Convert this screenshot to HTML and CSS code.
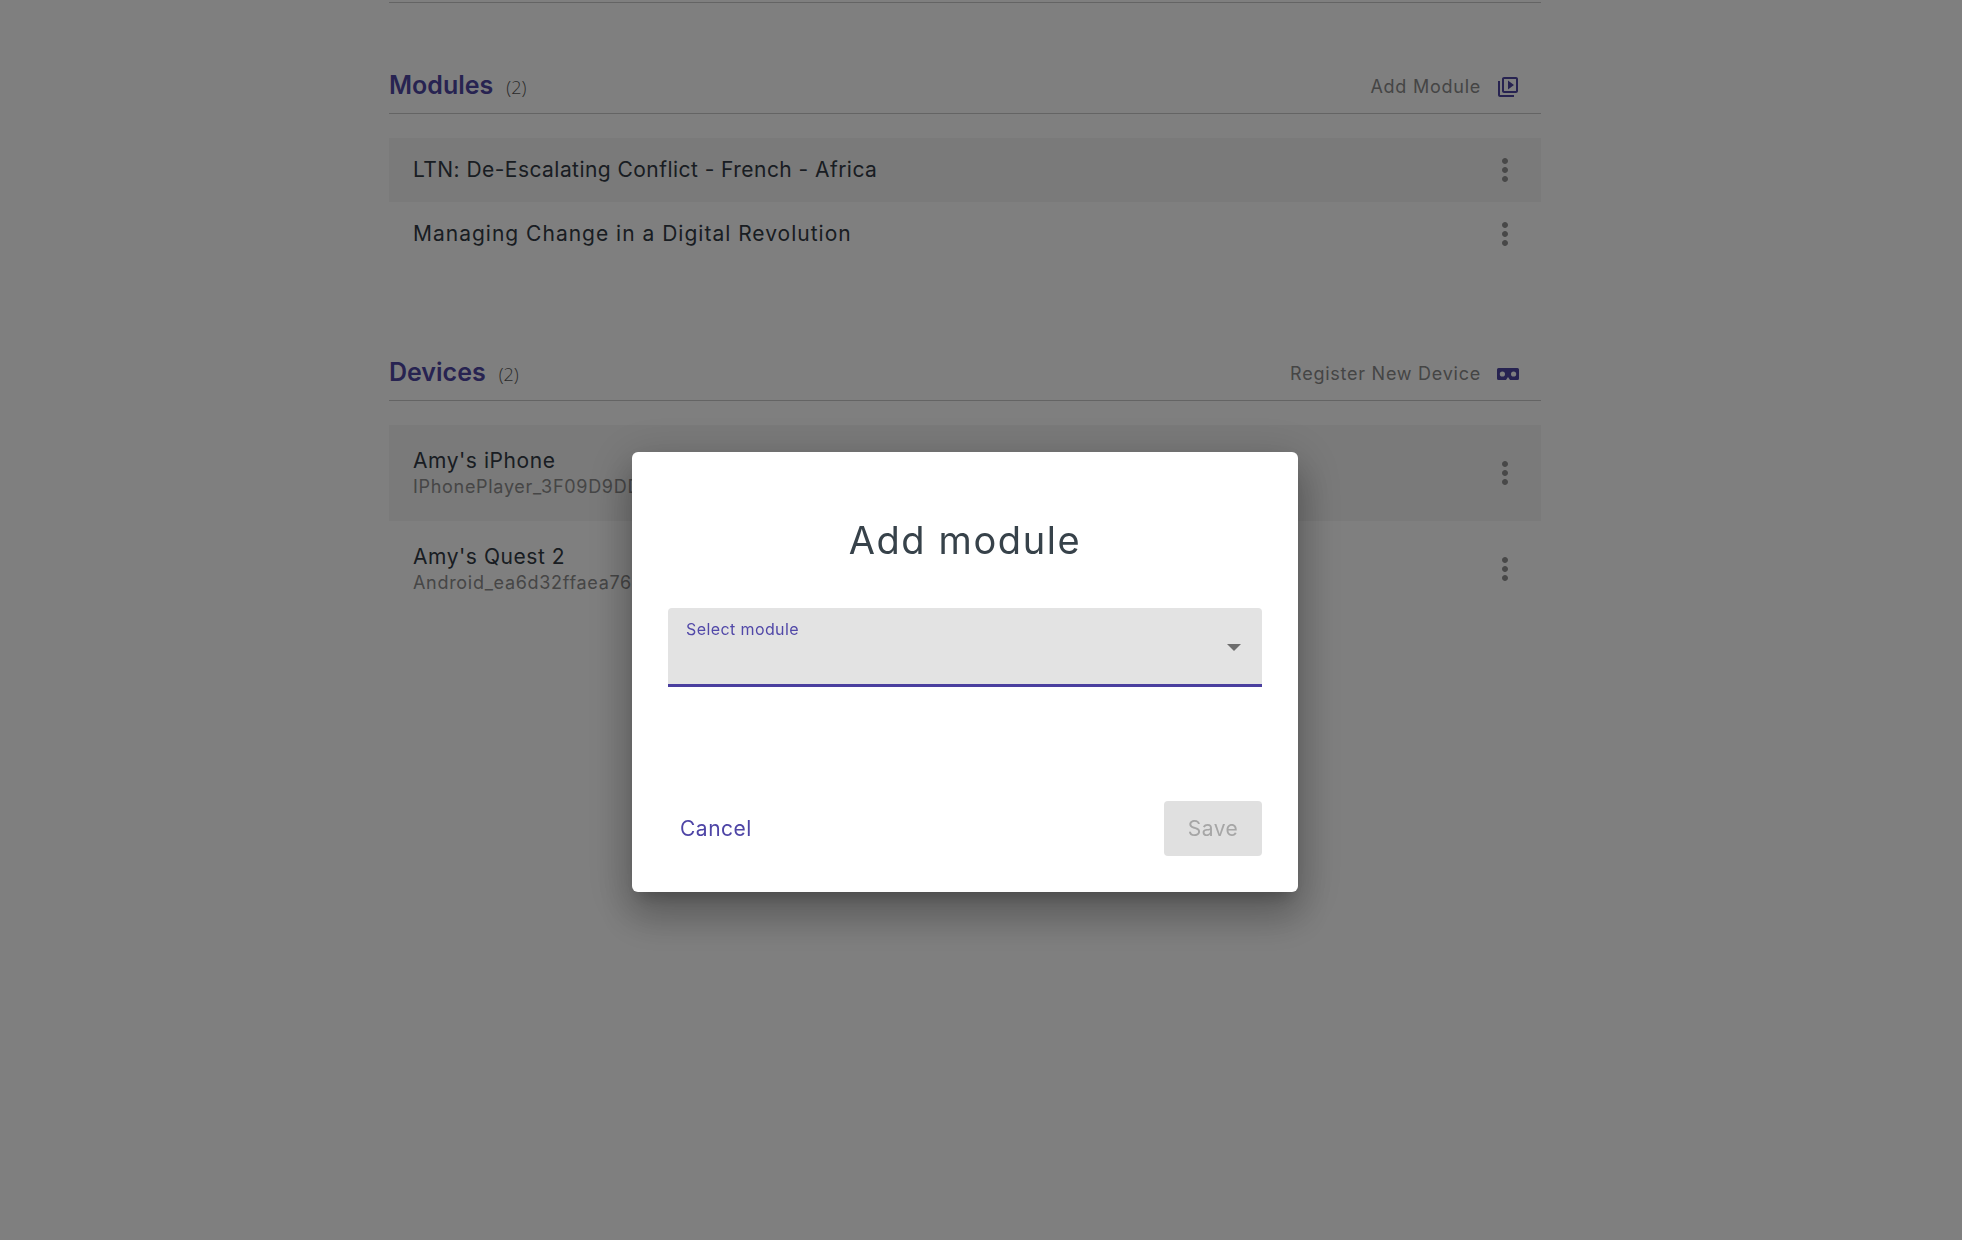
FILE: index.html
```html
<!DOCTYPE html>
<html lang="en">
<head>
    <meta charset="UTF-8">
    <title>Add module</title>
    <link rel="stylesheet" href="styles.css">
</head>
<body>

    <div class="page">
        <div class="top-rule"></div>

        <section class="section modules">
            <div class="section-head">
                <h2>Modules</h2>
                <span class="count">(2)</span>
                <a class="head-action">Add Module
                    <svg class="head-icon" viewBox="0 0 24 24"><path d="M4 6H2v14c0 1.100.9 2 2 2h14v-2H4V6zm16-4H8c-1.100 0-2 .9-2 2v12c0 1.100.9 2 2 2h12c1.100 0 2-.9 2-2V4c0-1.100-.9-2-2-2zm0 14H8V4h12v12zM12 5.500v9l6-4.500-6-4.500z"/></svg>
                </a>
            </div>
            <ul class="item-list">
                <li class="item shaded">
                    <div class="item-text"><div class="item-name tight">LTN: De-Escalating Conflict - French - Africa</div></div>
                    <svg class="more" viewBox="0 0 24 24"><path d="M12 8c1.100 0 2-.9 2-2s-.9-2-2-2-2 .9-2 2 .9 2 2 2zm0 2c-1.100 0-2 .9-2 2s.9 2 2 2 2-.9 2-2-.9-2-2-2zm0 6c-1.100 0-2 .9-2 2s.9 2 2 2 2-.9 2-2-.9-2-2-2z"/></svg>
                </li>
                <li class="item">
                    <div class="item-text"><div class="item-name wide">Managing Change in a Digital Revolution</div></div>
                    <svg class="more" viewBox="0 0 24 24"><path d="M12 8c1.100 0 2-.9 2-2s-.9-2-2-2-2 .9-2 2 .9 2 2 2zm0 2c-1.100 0-2 .9-2 2s.9 2 2 2 2-.9 2-2-.9-2-2-2zm0 6c-1.100 0-2 .9-2 2s.9 2 2 2 2-.9 2-2-.9-2-2-2z"/></svg>
                </li>
            </ul>
        </section>

        <section class="section devices">
            <div class="section-head">
                <h2>Devices</h2>
                <span class="count">(2)</span>
                <a class="head-action">Register New Device
                    <svg class="vr-icon" viewBox="0 0 22 12"><path fill-rule="evenodd" d="M1.500 0h19A1.500 1.500 0 0 1 22 1.500v9a1.500 1.500 0 0 1-1.500 1.500h-6L13 12l-2-3-2 3H1.500A1.500 1.500 0 0 1 0 10.500v-9A1.500 1.500 0 0 1 1.500 0zM5.400 3.400a2.600 2.600 0 1 0 0 5.200 2.600 2.600 0 0 0 0-5.200zm11.200 0a2.600 2.600 0 1 0 0 5.200 2.600 2.600 0 0 0 0-5.200z"/></svg>
                </a>
            </div>
            <ul class="item-list">
                <li class="item shaded tall">
                    <div class="item-text">
                        <div class="item-name">Amy's iPhone</div>
                        <div class="item-sub">IPhonePlayer_3F09D9DD</div>
                    </div>
                    <svg class="more" viewBox="0 0 24 24"><path d="M12 8c1.100 0 2-.9 2-2s-.9-2-2-2-2 .9-2 2 .9 2 2 2zm0 2c-1.100 0-2 .9-2 2s.9 2 2 2 2-.9 2-2-.9-2-2-2zm0 6c-1.100 0-2 .9-2 2s.9 2 2 2 2-.9 2-2-.9-2-2-2z"/></svg>
                </li>
                <li class="item tall">
                    <div class="item-text">
                        <div class="item-name">Amy's Quest 2</div>
                        <div class="item-sub">Android_ea6d32ffaea76c</div>
                    </div>
                    <svg class="more" viewBox="0 0 24 24"><path d="M12 8c1.100 0 2-.9 2-2s-.9-2-2-2-2 .9-2 2 .9 2 2 2zm0 2c-1.100 0-2 .9-2 2s.9 2 2 2 2-.9 2-2-.9-2-2-2zm0 6c-1.100 0-2 .9-2 2s.9 2 2 2 2-.9 2-2-.9-2-2-2z"/></svg>
                </li>
            </ul>
        </section>
    </div>

    <div class="overlay">
        <div class="dialog">
            <h1>Add module</h1>
            <div class="select-field">
                <span class="select-label">Select module</span>
                <span class="select-arrow"></span>
            </div>
            <div class="dialog-actions">
                <button class="btn-cancel">Cancel</button>
                <button class="btn-save" disabled>Save</button>
            </div>
        </div>
    </div>

</body>
</html>
```

FILE: styles.css
```css
html, body {
    margin: 0;
    height: 100%;
    overflow: hidden;
}
body {
    font-family: Inter, "Liberation Sans", sans-serif;
    background-color: #fff;
    color: #212b36;
}
.page {
    width: 1152px;
    margin-left: 389px;
}
.top-rule {
    height: 1px;
    margin-top: 2px;
    background-color: #c8c8c8;
}
.section-head {
    display: flex;
    align-items: baseline;
    height: 46px;
    border-bottom: 1px solid #c8c8c8;
}
.modules {
    margin-top: 64px;
}
.devices {
    margin-top: 88px;
}
h2 {
    margin: 0;
    font-size: 25px;
    line-height: 36px;
    font-weight: 600;
    color: #4f47a3;
}
.count {
    margin-left: 13px;
    font-family: "Open Sans", sans-serif;
    font-size: 18px;
    font-weight: 300;
    color: #555;
}
.head-action {
    margin-left: auto;
    margin-right: 21px;
    margin-bottom: 7px;
    display: flex;
    align-items: center;
    align-self: center;
    font-size: 18px;
    letter-spacing: 0.75px;
    color: #8a8a8a;
}
.head-icon {
    width: 24px;
    height: 24px;
    margin-left: 15px;
    fill: #4f47a3;
}
.vr-icon {
    width: 22px;
    height: 12px;
    margin-left: 16px;
    margin-right: 1px;
    fill: #4f47a3;
}
.item-list {
    list-style-type: none;
    margin: 24px 0 0;
    padding: 0;
}
.item {
    display: flex;
    align-items: center;
    height: 64px;
    padding: 0 24px;
}
.item.tall {
    height: 96px;
}
.item.shaded {
    background-color: #f4f4f4;
}
.item-text {
    flex-grow: 1;
}
.item-name {
    font-size: 21px;
    line-height: 28px;
    letter-spacing: 0.55px;
    color: #323a44;
}
.item-name.tight {
    letter-spacing: 0.45px;
}
.item-name.wide {
    letter-spacing: 1px;
}
.item-sub {
    font-size: 18px;
    line-height: 24px;
    letter-spacing: 0.7px;
    color: #8c8c8c;
}
.more {
    width: 36px;
    height: 36px;
    margin-right: -6px;
    fill: #909090;
}
.overlay {
    position: fixed;
    inset: 0;
    background-color: rgba(0, 0, 0, 0.5);
    padding: 452px 0 0 632px;
}
.dialog {
    box-sizing: border-box;
    width: 666px;
    height: 440px;
    padding: 0 36px;
    background-color: #fff;
    border-radius: 6px;
    box-shadow: 0 24px 38px 3px rgba(0, 0, 0, 0.2), 0 9px 46px 8px rgba(0, 0, 0, 0.14), 0 11px 15px -7px rgba(0, 0, 0, 0.2);
    display: flex;
    flex-direction: column;
}
h1 {
    margin: 64px 0 0;
    text-align: center;
    font-size: 38px;
    line-height: 48px;
    font-weight: 400;
    letter-spacing: 1.6px;
    color: #37424a;
}
.select-field {
    position: relative;
    box-sizing: border-box;
    height: 79px;
    margin-top: 44px;
    background-color: #e3e3e3;
    border-bottom: 3px solid #4a3f9f;
    border-radius: 4px 4px 0 0;
}
.select-label {
    position: absolute;
    left: 18px;
    top: 11px;
    font-size: 16px;
    line-height: 20px;
    letter-spacing: 0.4px;
    color: #5148a8;
}
.select-arrow {
    position: absolute;
    right: 21px;
    top: 36px;
    border-left: 7.5px solid transparent;
    border-right: 7.5px solid transparent;
    border-top: 7.5px solid #6e6e6e;
}
.dialog-actions {
    display: flex;
    justify-content: space-between;
    align-items: center;
    margin-top: 114px;
}
button {
    font-family: inherit;
    font-size: 21px;
    letter-spacing: 0.5px;
    border: none;
}
.btn-cancel {
    padding: 0 12px;
    height: 55px;
    background: none;
    color: #4e45a6;
}
.btn-save {
    width: 98px;
    height: 55px;
    background-color: #e0e0e0;
    color: #a6a6a6;
    border-radius: 4px;
}
```
